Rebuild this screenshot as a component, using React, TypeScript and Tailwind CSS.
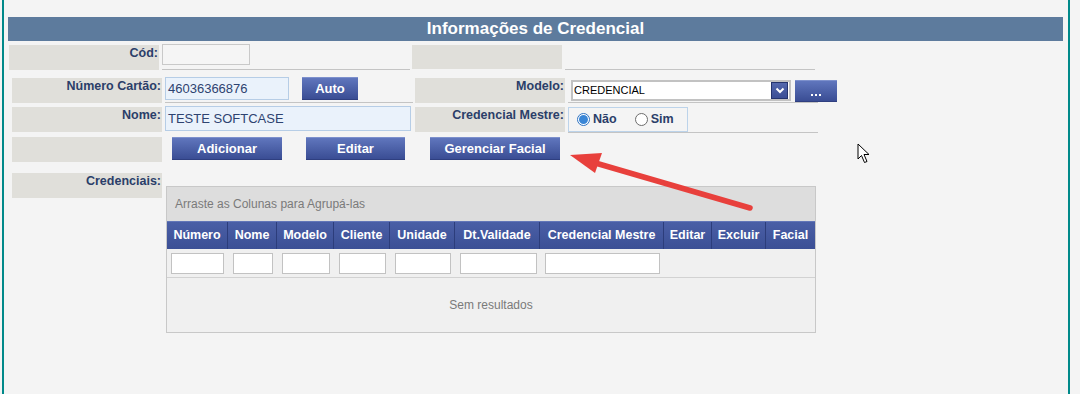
import React from "react";

const F = "font-['Liberation_Sans',Arial,sans-serif]";
const labelCls = `${F} bg-[#e0dfda] text-right text-[12.5px] font-bold text-[#2b3e69] pr-[1px] pt-[1px] leading-[15px]`;
const btnCls = `${F} flex items-center justify-center text-white text-[13px] font-bold bg-gradient-to-b from-[#6076bd] to-[#3a4d94] border-t border-[#7d90cc] shadow-[0_1px_0_#2f3f80]`;

const cols = [
  { name: "Número", w: 61, f: [4, 53] },
  { name: "Nome", w: 49, f: [5, 40] },
  { name: "Modelo", w: 57, f: [5, 48] },
  { name: "Cliente", w: 56, f: [5, 47] },
  { name: "Unidade", w: 65, f: [5, 56] },
  { name: "Dt.Validade", w: 85, f: [5, 77] },
  { name: "Credencial Mestre", w: 124, f: [5, 115] },
  { name: "Editar", w: 48, f: null },
  { name: "Excluir", w: 54, f: null },
  { name: "Facial", w: 49, f: null },
];

function Radio({ checked, label }: { checked: boolean; label: string }) {
  return (
    <div className="flex items-center">
      {checked ? (
        <span className="w-[13px] h-[13px] rounded-full border border-[#2f73c2] bg-white flex items-center justify-center">
          <span className="w-[9px] h-[9px] rounded-full bg-[#3a86d6]" />
        </span>
      ) : (
        <span className="w-[13px] h-[13px] rounded-full border border-[#6d6d6d] bg-white" />
      )}
      <span className={`${F} ml-[3px] text-[12.5px] font-bold text-[#2b3e69]`}>{label}</span>
    </div>
  );
}

export default function App() {
  return (
    <div className="relative w-[1080px] h-[394px] bg-[#f4f4f4] overflow-hidden">
      <div className="ml-[2px] w-[1068px] h-full border-x-2 border-[#00898a] pt-[17px]">
        {/* header */}
        <div className={`${F} ml-[4px] w-[1055px] h-[24px] bg-[#5d7b9d] text-white text-[17px] font-bold flex items-center justify-center`}>
          Informações de Credencial
        </div>

        {/* row 1 */}
        <div className="flex items-start mt-[4px]">
          <div className={`${labelCls} ml-[5px] w-[150px] h-[25px]`}>Cód:</div>
          <div className="ml-[3px] w-[248px] h-[25px] border-b border-[#c4c4c4]">
            <div className="-mt-px w-[88px] h-[21px] border border-[#c9c9c9] bg-[#f5f5f5]" />
          </div>
          <div className={`${labelCls} ml-[2px] w-[150px] h-[24px]`} />
          <div className="ml-[3px] w-[250px] h-[25px] border-b border-[#c4c4c4]" />
        </div>

        {/* row 2 */}
        <div className="flex items-start mt-[8px]">
          <div className={`${labelCls} ml-[8px] w-[150px] h-[25px]`}>Número Cartão:</div>
          <div className="ml-[3px] w-[248px] h-[25px] border-b border-[#c4c4c4] flex items-start">
            <div className={`${F} -mt-px w-[124px] h-[23px] border border-[#b6cde6] bg-[#eaf2fb] text-[13px] text-[#2e4370] pl-[2px] leading-[21px]`}>
              46036366876
            </div>
            <div className={`${btnCls} -mt-px ml-[13px] w-[56px] h-[22px]`}>Auto</div>
          </div>
          <div className={`${labelCls} ml-[2px] w-[150px] h-[25px]`}>Modelo:</div>
          <div className="ml-[3px] w-[250px] h-[25px] border-b border-[#c4c4c4] flex items-start shrink-0">
            <div className="ml-[3px] mt-[2px] w-[220px] h-[21px] border-2 border-[#c2c2c2] bg-white flex items-center justify-between shrink-0">
              <span className={`${F} pl-[1px] text-[11px] text-black`}>CREDENCIAL</span>
              <span className="mr-[1px] w-[17px] h-[17px] bg-gradient-to-b from-[#5468ad] to-[#3b4e95] border border-[#25346e] flex items-center justify-center">
                <svg width="10" height="7" viewBox="0 0 10 7">
                  <path d="M1.5 1.5 L5 5 L8.5 1.5" stroke="white" strokeWidth="2" fill="none" />
                </svg>
              </span>
            </div>
            <div className={`${btnCls} ml-[4px] mt-[2px] w-[42px] h-[21px] shrink-0 items-end pb-[5px]`}>
              <span className="flex gap-[1px]">
                <span className="w-[2px] h-[2px] bg-white" />
                <span className="w-[2px] h-[2px] bg-white ml-[1px]" />
                <span className="w-[2px] h-[2px] bg-white ml-[1px]" />
              </span>
            </div>
          </div>
        </div>

        {/* row 3 */}
        <div className="flex items-start mt-[4px]">
          <div className={`${labelCls} ml-[8px] w-[150px] h-[25px]`}>Nome:</div>
          <div className="ml-[3px] w-[248px] h-[26px]">
            <div className={`${F} -mt-px w-[246px] h-[25px] border border-[#b6cde6] bg-[#eaf2fb] text-[13px] text-[#2e4370] pl-[2px] leading-[23px]`}>
              TESTE SOFTCASE
            </div>
          </div>
          <div className={`${labelCls} ml-[2px] w-[150px] h-[25px]`}>Credencial Mestre:</div>
          <div className="ml-[3px] w-[250px] h-[26px] border-b border-[#c4c4c4]">
            <div className="w-[120px] h-[25px] border border-[#bcd3ea] flex items-center pl-[8px] gap-[18px]">
              <Radio checked label="Não" />
              <Radio checked={false} label="Sim" />
            </div>
          </div>
        </div>

        {/* row 4 */}
        <div className="flex items-start mt-[4px]">
          <div className={`${labelCls} ml-[8px] w-[150px] h-[25px]`} />
          <div className={`${btnCls} ml-[10px] w-[110px] h-[22px]`}>Adicionar</div>
          <div className={`${btnCls} ml-[24px] w-[99px] h-[22px]`}>Editar</div>
          <div className={`${btnCls} ml-[25px] w-[130px] h-[22px]`}>Gerenciar Facial</div>
        </div>

        {/* row 5 */}
        <div className="flex items-start mt-[11px]">
          <div className={`${labelCls} ml-[8px] w-[150px] h-[25px]`}>Credenciais:</div>
          <div className="ml-[4px] mt-[13px] w-[650px] border border-[#c8c8c8] bg-[#f0f0f0]">
            <div className={`${F} h-[34px] bg-[#dddddd] flex items-center pl-[8px] text-[12px] text-[#7a7a7a]`}>
              Arraste as Colunas para Agrupá-las
            </div>
            <div className="flex h-[28px] bg-gradient-to-b from-[#4a5fa6] to-[#3b4f95] border-t border-[#6276b8]">
              {cols.map((c, i) => (
                <div
                  key={c.name}
                  style={{ width: c.w }}
                  className={`${F} shrink-0 flex items-center justify-center text-white text-[12.5px] font-bold whitespace-nowrap border-r border-[#2c3d7b] ${i === cols.length - 1 ? "border-r-0" : ""}`}
                >
                  {c.name}
                </div>
              ))}
            </div>
            <div className="flex h-[29px] border-b border-[#d2d2d2] items-center">
              {cols.map((c) => (
                <div key={c.name} style={{ width: c.w }} className="shrink-0 flex items-center">
                  {c.f && (
                    <div
                      style={{ marginLeft: c.f[0], width: c.f[1] }}
                      className="h-[21px] bg-white border border-[#c2c2c2]"
                    />
                  )}
                </div>
              ))}
            </div>
            <div className={`${F} h-[54px] flex items-center justify-center text-[12px] text-[#7a7a7a]`}>
              Sem resultados
            </div>
          </div>
        </div>
      </div>

      {/* annotation arrow */}
      <svg className="absolute left-0 top-0 pointer-events-none" width="1080" height="394" viewBox="0 0 1080 394">
        <line x1="750" y1="208" x2="592" y2="162" stroke="#e8403c" strokeWidth="5.5" strokeLinecap="round" />
        <polygon points="570,155 602,153 595,173" fill="#e8403c" />
      </svg>

      {/* mouse cursor */}
      <svg className="absolute left-[857px] top-[143px] pointer-events-none" width="14" height="22" viewBox="0 0 14 22">
        <path d="M1 1 L1 16 L4.5 12.5 L7.5 19.5 L10 18.5 L7 11.5 L12 11.5 Z" fill="white" stroke="black" strokeWidth="1" strokeLinejoin="miter" />
      </svg>
    </div>
  );
}
